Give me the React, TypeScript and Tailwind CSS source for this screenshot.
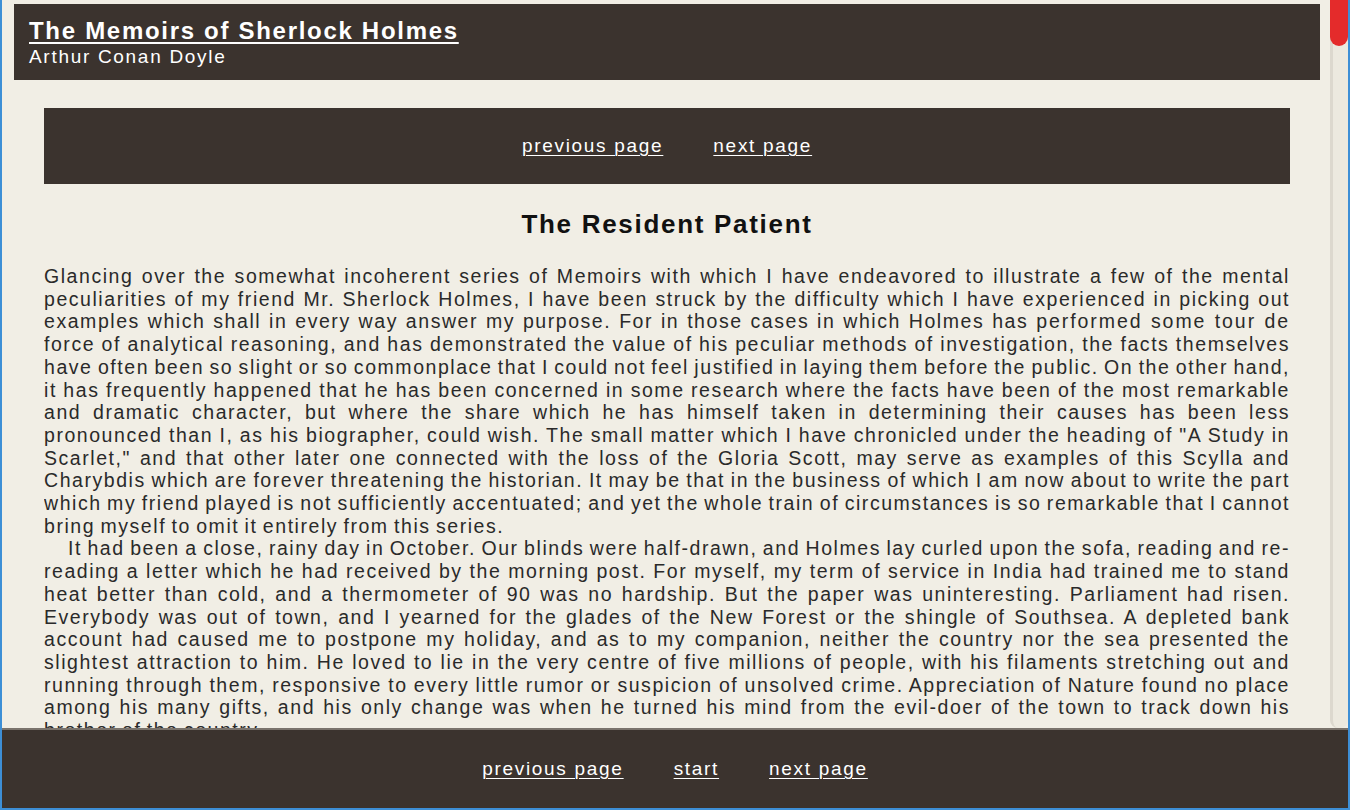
import React from 'react';

const p1a =
  'Glancing over the somewhat incoherent series of Memoirs with which I have endeavored to illustrate a few of the mental peculiarities of my friend Mr. Sherlock Holmes, I have been struck by the difficulty which I have experienced in picking out examples which shall in every way answer my purpose. For in those cases in which Holmes has ';
const p1b = 'performed some tour de';
const p1c =
  ' force of analytical reasoning, and has demonstrated the value of his peculiar methods of investigation, the facts themselves have often been so slight or so commonplace that I could not feel justified in laying them before the public. On the other hand, it has frequently happened that he has been concerned in some research where the facts have been of the most remarkable and dramatic character, but where the share which he has himself taken in determining their causes has been less pronounced than I, as his biographer, could wish. The small matter which I have chronicled under the heading of "A Study in Scarlet," and that other later one connected with the loss of the Gloria Scott, may serve as examples of this Scylla and Charybdis which are forever threatening the historian. It may be that in the business of which I am now about to write the part which my friend played is not sufficiently accentuated; and yet the whole train of circumstances is so remarkable that I cannot bring myself to omit it entirely from this series.';

const p2 =
  'It had been a close, rainy day in October. Our blinds were half-drawn, and Holmes lay curled upon the sofa, reading and re-reading a letter which he had received by the morning post. For myself, my term of service in India had trained me to stand heat better than cold, and a thermometer of 90 was no hardship. But the paper was uninteresting. Parliament had risen. Everybody was out of town, and I yearned for the glades of the New Forest or the shingle of Southsea. A depleted bank account had caused me to postpone my holiday, and as to my companion, neither the country nor the sea presented the slightest attraction to him. He loved to lie in the very centre of five millions of people, with his filaments stretching out and running through them, responsive to every little rumor or suspicion of unsolved crime. Appreciation of Nature found no place among his many gifts, and his only change was when he turned his mind from the evil-doer of the town to track down his brother of the country.';

function NavLink({ children }: { children: React.ReactNode }) {
  return (
    <a href="#" className="text-white underline underline-offset-[3px] decoration-1">
      {children}
    </a>
  );
}

export default function App() {
  return (
    <div
      className="w-[1350px] h-[810px] flex flex-col bg-[#f1eee5] border-x-2 border-b-2 border-[#3d8fd6] overflow-hidden tracking-[1.7px]"
      style={{ fontFamily: '"Liberation Sans", Arial, sans-serif' }}
    >
      <div className="flex flex-1 min-h-0">
        <main className="flex-1 min-w-0 overflow-hidden pt-1 pl-[12px] pr-[10px]">
          {/* book header */}
          <header className="h-[76px] bg-[#3b332e] pl-[15px] pt-[14px]">
            <h1 className="text-[24px] leading-[26px] font-bold text-white">
              <a href="#" className="underline underline-offset-[3px] decoration-2">
                The Memoirs of Sherlock Holmes
              </a>
            </h1>
            <p className="mt-[2px] text-[19px] leading-[22px] text-white">Arthur Conan Doyle</p>
          </header>

          <div className="px-[30px]">
            <nav className="mt-[28px] h-[76px] bg-[#3b332e] flex items-center justify-center gap-[50px] text-[19px]">
              <NavLink>previous page</NavLink>
              <NavLink>next page</NavLink>
            </nav>

            <h2 className="mt-[25px] text-center text-[26px] leading-[30px] font-bold text-[#111]">
              The Resident Patient
            </h2>

            <div className="mt-[26px] h-[464px] overflow-hidden text-[19.5px] leading-[22.7px] tracking-[1.55px] [word-spacing:-1.6px] text-[#2a2a2a] text-justify">
              <p>
                {p1a}
                <span className="tracking-[1.95px]">{p1b}</span>
                {p1c}
              </p>
              <p className="indent-[24px]">{p2}</p>
            </div>
          </div>
        </main>

        {/* scrollbar */}
        <div className="w-[18px] shrink-0 flex flex-col">
          <div className="flex-1 bg-[#ece9df] border-l-[3px] border-[#dcd8ce] rounded-b-[8px] relative">
            <div className="absolute -left-[3px] right-0 top-0 h-[46px] bg-[#e42b2b] rounded-b-full"></div>
          </div>
        </div>
      </div>

      <footer className="h-[80px] shrink-0 bg-[#3b332e] border-t-2 border-[#7a736c] flex items-center justify-center gap-[50px] text-[19px]">
        <NavLink>previous page</NavLink>
        <NavLink>start</NavLink>
        <NavLink>next page</NavLink>
      </footer>
    </div>
  );
}
